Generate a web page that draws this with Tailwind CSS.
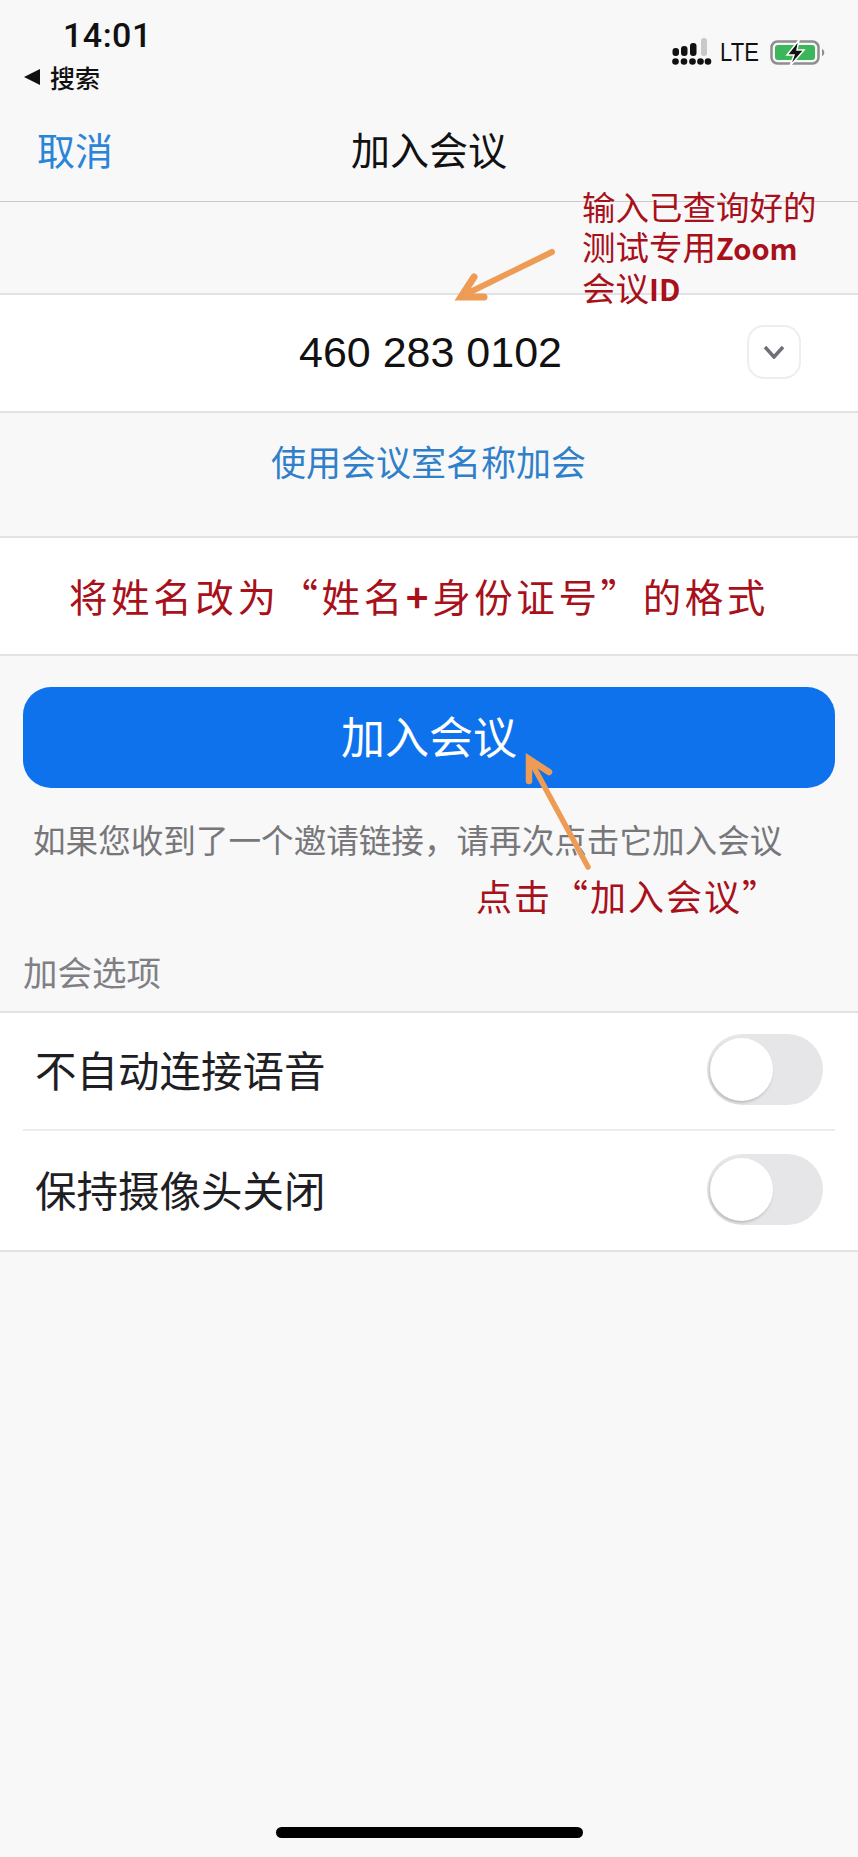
<!DOCTYPE html>
<html lang="zh-CN">
<head>
<meta charset="utf-8">
<script src="https://cdn.jsdelivr.net/npm/@tailwindcss/browser@4"></script>
</head>
<body class="m-0 bg-[#f8f8f9]">
<div lang="zh-CN" class="relative w-[858px] h-[1857px] overflow-hidden bg-[#f8f8f9] font-['Noto_Sans_CJK_SC','Noto_Sans',sans-serif]">

  <!-- status bar -->
  <div class="h-[105px] flex justify-between">
    <div class="flex flex-col pl-[24px] pt-[19px]">
      <div class="pl-[39px] h-[32px] leading-[32px] text-[34px] font-medium text-[#111] font-['Roboto',sans-serif] tracking-[0.5px]">14:01</div>
      <div class="mt-[12px] flex items-center h-[28px] gap-[10px]">
        <span class="w-0 h-0 border-y-[8px] border-y-transparent border-r-[16px] border-r-[#111]"></span>
        <span class="text-[25px] leading-[28px] font-medium text-[#111]">搜索</span>
      </div>
    </div>
    <div class="flex items-start pt-[37px] pr-[32px]">
      <svg width="40" height="28" viewBox="0 0 40 28" class="mt-[1px]">
        <g fill="#111">
          <circle cx="3.500" cy="23.500" r="3.300"/><circle cx="12" cy="23.500" r="3.300"/><circle cx="20.500" cy="23.500" r="3.300"/><circle cx="28.500" cy="23.500" r="3.300"/><circle cx="36" cy="23.500" r="3.300"/>
          <rect x="0.500" y="10" width="6.500" height="8" rx="3"/><rect x="9" y="8" width="6.500" height="10" rx="3"/><rect x="18" y="5" width="6.500" height="13" rx="3"/>
        </g>
        <rect x="29" y="0" width="6" height="18" rx="2.700" fill="#c9c9c9"/>
      </svg>
      <span class="ml-[8px] w-[40px] text-[26px] leading-[30px] font-['Liberation_Sans',sans-serif] text-[#111] scale-x-[0.85] origin-left whitespace-nowrap">LTE</span>
      <svg width="56" height="26" viewBox="0 0 56 26" class="ml-[10px] mt-[3px]">
        <rect x="1.500" y="1.500" width="47" height="22" rx="6" fill="none" stroke="#8e8e8e" stroke-width="2.500"/>
        <rect x="5" y="5" width="40" height="15" rx="3" fill="#3cb65a"/>
        <path d="M52 9 C55 10 55 15 52 16 Z" fill="#8e8e8e"/>
        <path d="M29 0 L17 15 H24 L20 26 L34 10 H27 Z" fill="#111" stroke="#fff" stroke-width="1.500"/>
      </svg>
    </div>
  </div>

  <!-- nav -->
  <div class="relative h-[97px] border-b-[1.5px] border-[#c9c9cb] flex items-center justify-center">
    <span class="absolute left-[37px] top-[24px] text-[38px] leading-[40px] text-[#2b85d6]">取消</span>
    <span class="text-[39px] leading-[44px] pb-[10px] text-[#111]">加入会议</span>
  </div>

  <div class="h-[91px]"></div>

  <!-- meeting id -->
  <div class="relative h-[120px] bg-white border-y-2 border-[#e2e2e4] flex items-center justify-center">
    <span class="text-[43px] leading-[48px] mb-[3px] ml-[3px] text-[#111] font-['Liberation_Sans',sans-serif]">460 283 0102</span>
    <div class="absolute right-[57px] top-[30px] w-[54px] h-[54px] rounded-[17px] border-[2.500px] border-[#eeeeef] bg-white flex items-center justify-center">
      <svg width="22" height="14" viewBox="0 0 22 14"><path d="M2 2 L11 12 L20 2" fill="none" stroke="#6f6f7c" stroke-width="3.500"/></svg>
    </div>
  </div>

  <!-- room name link -->
  <div class="h-[123px] pb-[27px] flex items-center justify-center">
    <span class="text-[35px] leading-[44px] mr-[1px] text-[#2f80c9]">使用会议室名称加会</span>
  </div>

  <!-- name field -->
  <div class="h-[120px] bg-white border-y-2 border-[#e2e2e4] flex items-center justify-center">
    <span class="text-[38.500px] leading-[48px] tracking-[3.600px] mr-[20px] mb-[3px] text-[#a8101a]">将姓名改为“姓名<b>+</b>身份证号”的格式</span>
  </div>

  <!-- join button -->
  <div class="px-[23px] pt-[31px]">
    <div class="h-[101px] rounded-[28px] bg-[#0e72ed] flex items-center justify-center">
      <span class="text-[44px] leading-[50px] pb-[6px] text-white">加入会议</span>
    </div>
  </div>

  <p class="pl-[33px] pt-[31px] h-[100px] text-[32.600px] leading-[40px] text-[#77777a]">如果您收到了一个邀请链接，请再次点击它加入会议</p>

  <!-- options -->
  <div class="pl-[23px] pt-[61px] h-[123px] text-[34.500px] leading-[44px] text-[#808084]">加会选项</div>

  <div class="bg-white border-y-2 border-[#e2e2e4]">
    <div class="mx-[23px] h-[118px] border-b-2 border-[#ececee] flex items-center justify-between pl-[12px] pr-[12px]">
      <span class="text-[41.500px] leading-[48px] mb-[4px] text-[#1e1e24]">不自动连接语音</span>
      <div class="relative w-[116px] h-[71px] mb-[3px] rounded-full bg-[#e6e6e8]">
        <div class="absolute left-[3px] top-[4px] w-[63px] h-[63px] rounded-full bg-white shadow-[-1px_2px_3px_rgba(0,0,0,0.18)]"></div>
      </div>
    </div>
    <div class="mx-[23px] h-[119px] flex items-center justify-between pl-[12px] pr-[12px]">
      <span class="text-[41.500px] leading-[48px] mb-[4px] text-[#1e1e24]">保持摄像头关闭</span>
      <div class="relative w-[116px] h-[71px] mb-[3px] rounded-full bg-[#e6e6e8]">
        <div class="absolute left-[3px] top-[4px] w-[63px] h-[63px] rounded-full bg-white shadow-[-1px_2px_3px_rgba(0,0,0,0.18)]"></div>
      </div>
    </div>
  </div>

  <!-- home indicator -->
  <div class="absolute left-[276px] top-[1827px] w-[307px] h-[11px] rounded-full bg-black"></div>

  <!-- annotations over the screenshot -->
  <div class="absolute left-[582px] top-[186px] w-[270px] text-[33.500px] leading-[40px] text-[#a8101a]">
    <div>输入已查询好的</div>
    <div>测试专用<b class="font-bold text-[29px]">Zoom</b></div>
    <div>会议<b class="font-bold text-[30px]">ID</b></div>
  </div>
  <div class="absolute left-[476px] top-[872px] text-[36px] leading-[46px] tracking-[2px] text-[#a8101a] whitespace-nowrap">点击“加入会议”</div>
  <svg class="absolute left-0 top-0" width="858" height="1000" viewBox="0 0 858 1000">
    <g fill="none" stroke="#ee9b55" stroke-linecap="round">
      <path d="M552 252 L462 296" stroke-width="6"/>
      <path d="M474 277 L461 297 L484 297" stroke-width="7"/>
      <path d="M588 867 L530 760" stroke-width="5.500"/>
      <path d="M529 781 L529 759 L549 772" stroke-width="6.500"/>
    </g>
  </svg>
</div>
</body>
</html>
